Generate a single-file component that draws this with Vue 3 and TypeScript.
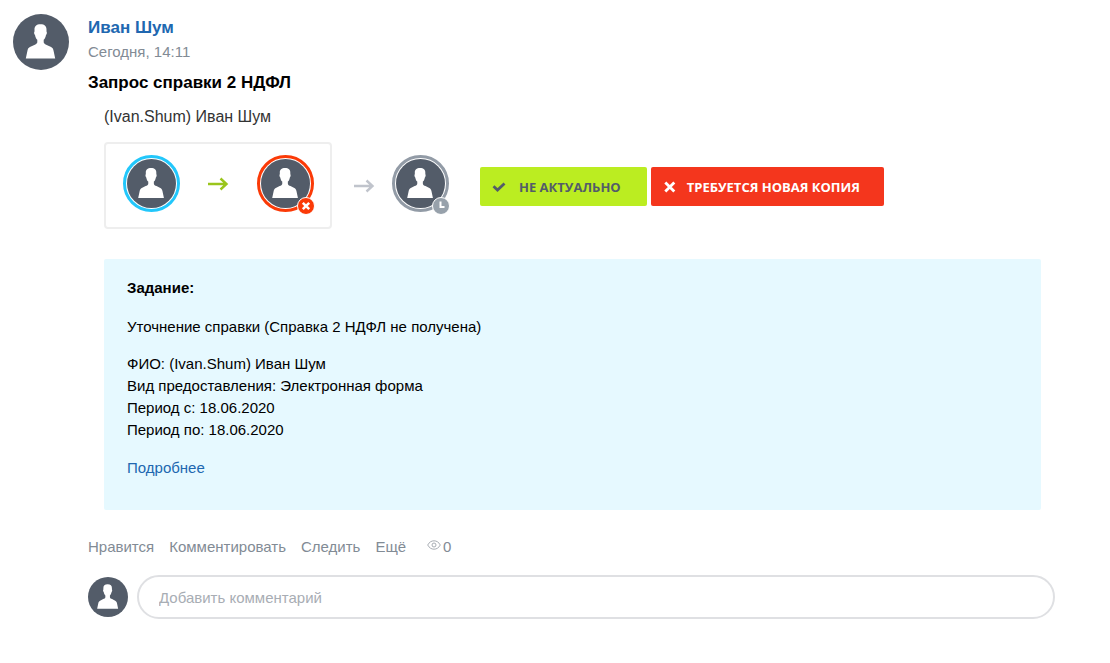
<script setup lang="ts">
import { ref } from 'vue'

interface Approver {
  state: 'started' | 'declined' | 'waiting'
  label: string
}

const flow: Approver[] = [
  { state: 'started', label: 'Запущено' },
  { state: 'declined', label: 'Отклонено' },
]
const next: Approver = { state: 'waiting', label: 'Ожидание' }

const details: string[] = [
  'ФИО: (Ivan.Shum) Иван Шум',
  'Вид предоставления: Электронная форма',
  'Период с: 18.06.2020',
  'Период по: 18.06.2020',
]
const actions: string[] = ['Нравится', 'Комментировать', 'Следить', 'Ещё']
const comment = ref('')
const person =
  'M27.500 10.200c-4 0-6.200 2-6 5.600v1.700c-.7.500-.4 3 .5 3.500.4 2.200 1.100 3.700 2.300 4.800v2.400c0 1.300-1.500 2-3 2.700l-4.400 2.200c-1.400.8-2 1.700-2.400 3.400l-1.700 8h29.400l-1.700-8c-.4-1.700-1-2.600-2.400-3.400l-4.400-2.200c-1.500-.7-3-1.400-3-2.700v-2.400c1.200-1.100 1.900-2.600 2.300-4.800.9-.5 1.200-3 .5-3.500v-1.700c.2-3.600-2-5.600-6-5.600z'
</script>

<template>
  <article class="post">
    <svg class="avatar" viewBox="0 0 56 56" aria-hidden="true">
      <circle cx="28" cy="28" r="28" /><path :d="person" />
    </svg>
    <div class="body">
      <header>
        <a class="author" href="#">Иван Шум</a>
        <time class="date">Сегодня, 14:11</time>
        <h1 class="title">Запрос справки 2 НДФЛ</h1>
      </header>

      <section class="process">
        <p class="subject">(Ivan.Shum) Иван Шум</p>
        <div class="steps">
          <div class="panel">
            <template v-for="(item, i) in flow" :key="item.state">
              <svg v-if="i > 0" class="arrow arrow-done" viewBox="0 0 22 14" aria-hidden="true">
                <path d="M1 7h18M13.500 1.500L19.500 7l-6 5.500" />
              </svg>
              <div class="member" :class="item.state" role="img" :aria-label="item.label">
                <svg class="avatar" viewBox="0 0 56 56" aria-hidden="true">
                  <circle cx="28" cy="28" r="28" /><path :d="person" />
                </svg>
                <svg v-if="item.state === 'declined'" class="badge" viewBox="0 0 18 18" aria-hidden="true">
                  <circle cx="9" cy="9" r="8.500" />
                  <path d="M5.800 5.800l6.400 6.400M12.200 5.800l-6.400 6.400" />
                </svg>
              </div>
            </template>
          </div>
          <svg class="arrow arrow-next" viewBox="0 0 22 14" aria-hidden="true">
            <path d="M1 7h18M13.500 1.500L19.500 7l-6 5.500" />
          </svg>
          <div class="member" :class="next.state" role="img" :aria-label="next.label">
            <svg class="avatar" viewBox="0 0 56 56" aria-hidden="true">
              <circle cx="28" cy="28" r="28" /><path :d="person" />
            </svg>
            <svg class="badge" viewBox="0 0 18 18" aria-hidden="true">
              <circle cx="9" cy="9" r="8.500" />
              <path class="hands" d="M8.500 4.500v5.500h4" />
            </svg>
          </div>
          <div class="buttons">
            <button class="btn accept" type="button">
              <svg viewBox="0 0 14 12" aria-hidden="true"><path d="M1.500 5.300l4 3.700 7-6.500" /></svg>
              НЕ АКТУАЛЬНО
            </button>
            <button class="btn decline" type="button">
              <svg viewBox="0 0 14 12" aria-hidden="true"><path d="M2.300 1.500l9 9M11.300 1.500l-9 9" /></svg>
              ТРЕБУЕТСЯ НОВАЯ КОПИЯ
            </button>
          </div>
        </div>

        <div class="task">
          <h2>Задание:</h2>
          <p>Уточнение справки (Справка 2 НДФЛ не получена)</p>
          <ul>
            <li v-for="line in details" :key="line">{{ line }}</li>
          </ul>
          <a href="#">Подробнее</a>
        </div>
      </section>

      <div class="actions">
        <button v-for="action in actions" :key="action" type="button">{{ action }}</button>
        <span class="views">
          <svg viewBox="0 0 14 10" aria-hidden="true">
            <path d="M.7 5C2.200 2.200 4.400.8 7 .8S11.800 2.200 13.300 5C11.800 7.800 9.600 9.200 7 9.200S2.200 7.800.7 5z" />
            <circle cx="7" cy="5" r="2" />
          </svg>0
        </span>
      </div>

      <form class="reply" @submit.prevent>
        <svg class="avatar" viewBox="0 0 56 56" aria-hidden="true">
          <circle cx="28" cy="28" r="28" /><path :d="person" />
        </svg>
        <input v-model="comment" type="text" placeholder="Добавить комментарий" aria-label="Добавить комментарий" />
      </form>
    </div>
  </article>
</template>

<style>
body {
  background: #fff;
}
</style>

<style scoped>
.post {
  display: flex;
  align-items: flex-start;
  gap: 19px;
  padding: 14px 55px 24px 13px;
  color: #000;
  font-family: "Liberation Sans", Arial, sans-serif;
  font-size: 15px;
  line-height: 22px;
}
.body {
  flex: 1;
  min-width: 0;
}
h1, h2, p, ul {
  margin: 0;
  padding: 0;
}
a {
  color: #2067b0;
  text-decoration: none;
}
.avatar {
  display: block;
  flex: none;
  width: 56px;
  height: 56px;
}
.avatar circle {
  fill: #535c69;
}
.avatar path {
  fill: #fff;
}
.author {
  display: block;
  font-size: 17px;
  font-weight: bold;
  line-height: 28px;
}
.date {
  display: block;
  color: #828b95;
  line-height: 20px;
}
.title {
  padding-top: 9px;
  font-size: 17px;
  line-height: 24px;
}
.process {
  margin: 10px 14px 0 16px;
}
.subject {
  color: #333;
  font-size: 16px;
  line-height: 24px;
}
.steps {
  display: flex;
  align-items: center;
  margin-top: 13px;
}
.panel {
  display: flex;
  align-items: flex-start;
  box-sizing: border-box;
  height: 87px;
  padding: 11px 16px 0 17px;
  border: 2px solid #eee;
  border-radius: 4px;
}
.member {
  position: relative;
  flex: none;
  box-sizing: border-box;
  width: 57px;
  height: 57px;
  padding: 1px;
  border: 3px solid #22c7fb;
  border-radius: 50%;
}
.member .avatar {
  width: 49px;
  height: 49px;
}
.member .badge {
  position: absolute;
  right: -4px;
  bottom: -6px;
  width: 18px;
  height: 18px;
}
.badge circle {
  fill: #fb3a07;
  stroke: #fff;
}
.badge path {
  fill: none;
  stroke: #fff;
  stroke-width: 2.5;
}
.badge .hands {
  stroke-width: 2;
}
.declined {
  border-color: #fb3a07;
}
.waiting {
  margin-bottom: 4px;
  border-color: #929ba6;
}
.waiting .badge circle {
  fill: #97a1ab;
}
.arrow {
  flex: none;
  width: 22px;
  height: 14px;
  fill: none;
  stroke-width: 2.4;
}
.arrow-done {
  margin: 22px 28px 0 27px;
  stroke: #9ac51c;
}
.arrow-next {
  margin: 0 17px 0 21px;
  stroke: #c0c4cc;
}
.buttons {
  display: flex;
  gap: 4px;
  margin: 2px 0 0 31px;
}
.btn {
  display: flex;
  align-items: center;
  gap: 13px;
  height: 39px;
  padding: 0 26px 0 12px;
  border: 0;
  border-radius: 2px;
  font: bold 13px/20px "Open Sans", sans-serif;
  white-space: nowrap;
}
.btn svg {
  width: 14px;
  height: 12px;
  fill: none;
  stroke: currentColor;
  stroke-width: 2.8;
}
.accept {
  background: #bbed21;
  color: #535c69;
}
.decline {
  gap: 10px;
  padding-right: 24px;
  background: #f4361d;
  color: #fff;
}
.task {
  margin-top: 30px;
  padding: 18px 23px 31px;
  border-radius: 2px;
  background: #e6f9ff;
}
.task h2 {
  font-size: 15px;
}
.task p {
  margin: 17px 0 15px;
}
.task ul {
  list-style: none;
}
.task a {
  display: inline-block;
  margin-top: 16px;
}
.actions {
  display: flex;
  gap: 15px;
  margin-top: 26px;
  color: #828b95;
}
.actions button {
  padding: 0;
  border: 0;
  background: none;
  color: inherit;
  font: inherit;
}
.views {
  display: flex;
  gap: 2px;
  margin-left: 6px;
}
.views svg {
  width: 14px;
  height: 10px;
  margin-top: 4px;
  fill: none;
  stroke: #a8adb4;
}
.reply {
  display: flex;
  align-items: center;
  gap: 9px;
  margin-top: 17px;
}
.reply .avatar {
  width: 40px;
  height: 40px;
}
.reply input {
  flex: 1;
  box-sizing: border-box;
  min-width: 0;
  height: 44px;
  padding: 0 20px;
  border: 2px solid #dfe0e3;
  border-radius: 22px;
  background: #fff;
  color: #333;
  font: 15px/22px "Liberation Sans", Arial, sans-serif;
}
.reply input::placeholder {
  color: #a8adb4;
  opacity: 1;
}
</style>
